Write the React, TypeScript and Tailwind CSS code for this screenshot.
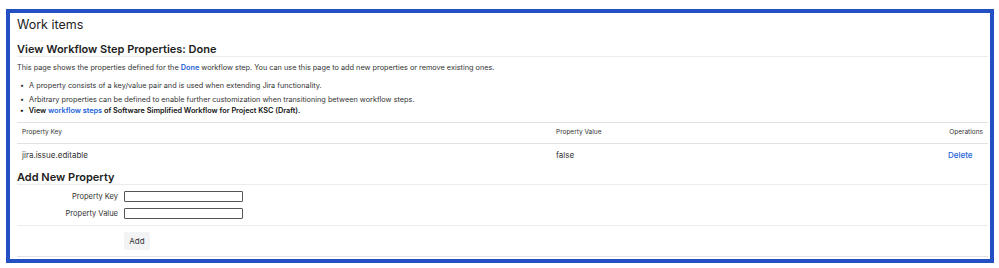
export default function App() {
  return (
    <div className="w-[999px] h-[268px] bg-white pt-[9px] pl-[6px] font-['Inter','Liberation_Sans',sans-serif] text-[#333]">
      <div className="w-[988px] h-[254px] border-4 border-[#2350c2] pl-[7px] pr-[2px] overflow-hidden">
        <div className="h-[24px] flex items-center">
          <h1 className="text-[12.5px] leading-[16px] text-[#222]">Work items</h1>
        </div>

        <div className="h-[20px] pt-[5px] border-b border-[#ececec]">
          <h2 className="text-[11px] leading-[14px] font-semibold text-[#222]">View Workflow Step Properties: Done</h2>
        </div>

        <p className="mt-[4px] text-[7.3px] leading-[14px]">
          This page shows the properties defined for the{" "}
          <a className="text-[#1a5fd8] font-semibold">Done</a> workflow step. You can use this page to add new
          properties or remove existing ones.
        </p>

        <ul className="h-[48px] pt-[5px] pl-[3px] text-[7.3px] border-b border-[#e2e2e2]">
          <li className="leading-[11px] flex gap-[5px]"><span>•</span>A property consists of a key/value pair and is used when extending Jira functionality.</li>
          <li className="mt-[3px] leading-[11px] flex gap-[5px]"><span>•</span>Arbitrary properties can be defined to enable further customization when transitioning between workflow steps.</li>
          <li className="leading-[11px] flex gap-[5px] font-semibold text-[#111]">
            <span>•</span>
            <span>
              View <a className="text-[#1a5fd8]">workflow steps</a> of Software Simplified Workflow for Project KSC (Draft).
            </span>
          </li>
        </ul>

        <div className="h-[21px] flex items-center text-[6.5px] border-b border-[#e2e2e2] px-[5px]">
          <span className="w-[534px]">Property Key</span>
          <span className="flex-1">Property Value</span>
          <span className="w-[35px] text-right">Operations</span>
        </div>
        <div className="h-[21px] flex items-center text-[8px] px-[5px]">
          <span className="w-[534px]">jira.issue.editable</span>
          <span className="flex-1">false</span>
          <a className="w-[35px] text-[#1a5fd8] font-medium">Delete</a>
        </div>

        <div className="h-[20px] pt-[5px] border-b border-[#ececec]">
          <h2 className="text-[11px] leading-[14px] font-semibold text-[#222]">Add New Property</h2>
        </div>

        <div className="h-[41px] pt-[6px] border-b border-[#ececec] text-[7.5px]">
          <div className="flex items-center h-[11px]">
            <label className="w-[101px] shrink-0 text-right">Property Key</label>
            <input className="ml-[6px] shrink-0 w-[119px] h-[11px] border border-[#555] rounded-[1px]" />
          </div>
          <div className="flex items-center h-[11px] mt-[6px]">
            <label className="w-[101px] shrink-0 text-right">Property Value</label>
            <input className="ml-[6px] shrink-0 w-[119px] h-[11px] border border-[#555] rounded-[1px]" />
          </div>
        </div>

        <div className="h-[31px] pt-[6px] pl-[107px] flex items-start border-b border-[#e2e2e2]">
          <button className="w-[26px] h-[18px] bg-[#f2f3f5] rounded-[2px] text-[8px] leading-[18px] text-[#333]">Add</button>
        </div>
      </div>
    </div>
  );
}
